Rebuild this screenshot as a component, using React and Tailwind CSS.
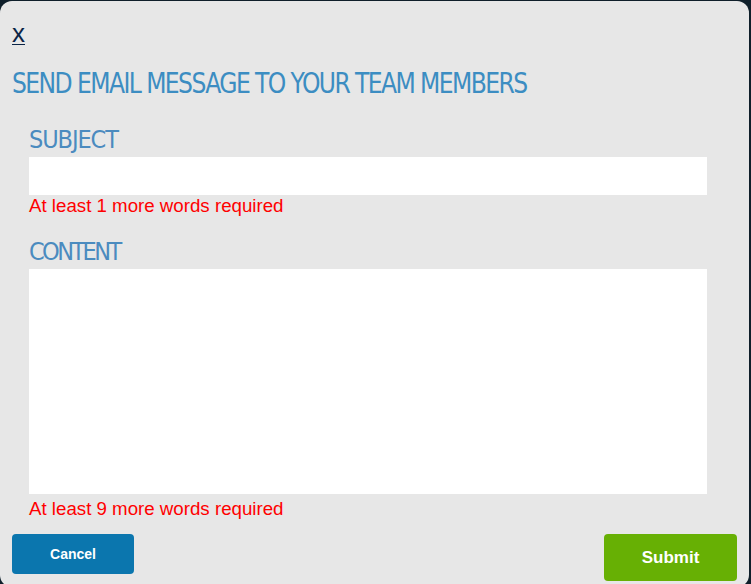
export default function App() {
  const condensed = { fontFamily: '"DejaVu Sans Condensed", "Liberation Sans", sans-serif' };
  const arial = { fontFamily: '"Liberation Sans", Arial, sans-serif' };
  return (
    <div className="w-[751px] h-[584px] overflow-hidden bg-[#0f1f2a]">
      <div className="mt-[1px] w-[749px] h-[586px] rounded-[12px] bg-[#e7e7e7] px-[12px] pt-[17px]">
        <a href="#" className="block w-fit text-[26px] leading-[30px] text-[#0b2446] underline decoration-1 underline-offset-[2px]" style={arial}>x</a>
        <h1 className="mt-[18px] w-[600px] origin-left scale-x-[0.9] text-[29px] leading-[34px] tracking-[-1.75px] text-[#3c8dc2] font-normal whitespace-nowrap" style={condensed}>
          SEND EMAIL MESSAGE TO YOUR TEAM MEMBERS
        </h1>
        <div className="ml-[17px] w-[678px]">
          <label className="block mt-[25px] text-[25px] leading-[30px] tracking-[-1.1px] text-[#4b8bbf]" style={condensed}>SUBJECT</label>
          <input className="block mt-[2px] w-[678px] h-[38px] bg-white outline-none border-0" />
          <p className="text-[18.7px] leading-[22px] text-[#ff0000]" style={arial}>At least 1 more words required</p>
          <label className="block mt-[20px] text-[25px] leading-[30px] tracking-[-2.6px] text-[#4b8bbf]" style={condensed}>CONTENT</label>
          <textarea className="block mt-[2px] w-[678px] h-[225px] bg-white outline-none border-0 resize-none" />
          <p className="mt-[4px] text-[18.7px] leading-[22px] text-[#ff0000]" style={arial}>At least 9 more words required</p>
        </div>
        <div className="mt-[14px] flex items-start justify-between" style={arial}>
          <button className="w-[122px] h-[40px] rounded-[4px] bg-[#0b76ae] text-white font-bold text-[14px]">Cancel</button>
          <button className="w-[133px] h-[47px] rounded-[4px] bg-[#67b004] text-white font-bold text-[17px]">Submit</button>
        </div>
      </div>
    </div>
  );
}
